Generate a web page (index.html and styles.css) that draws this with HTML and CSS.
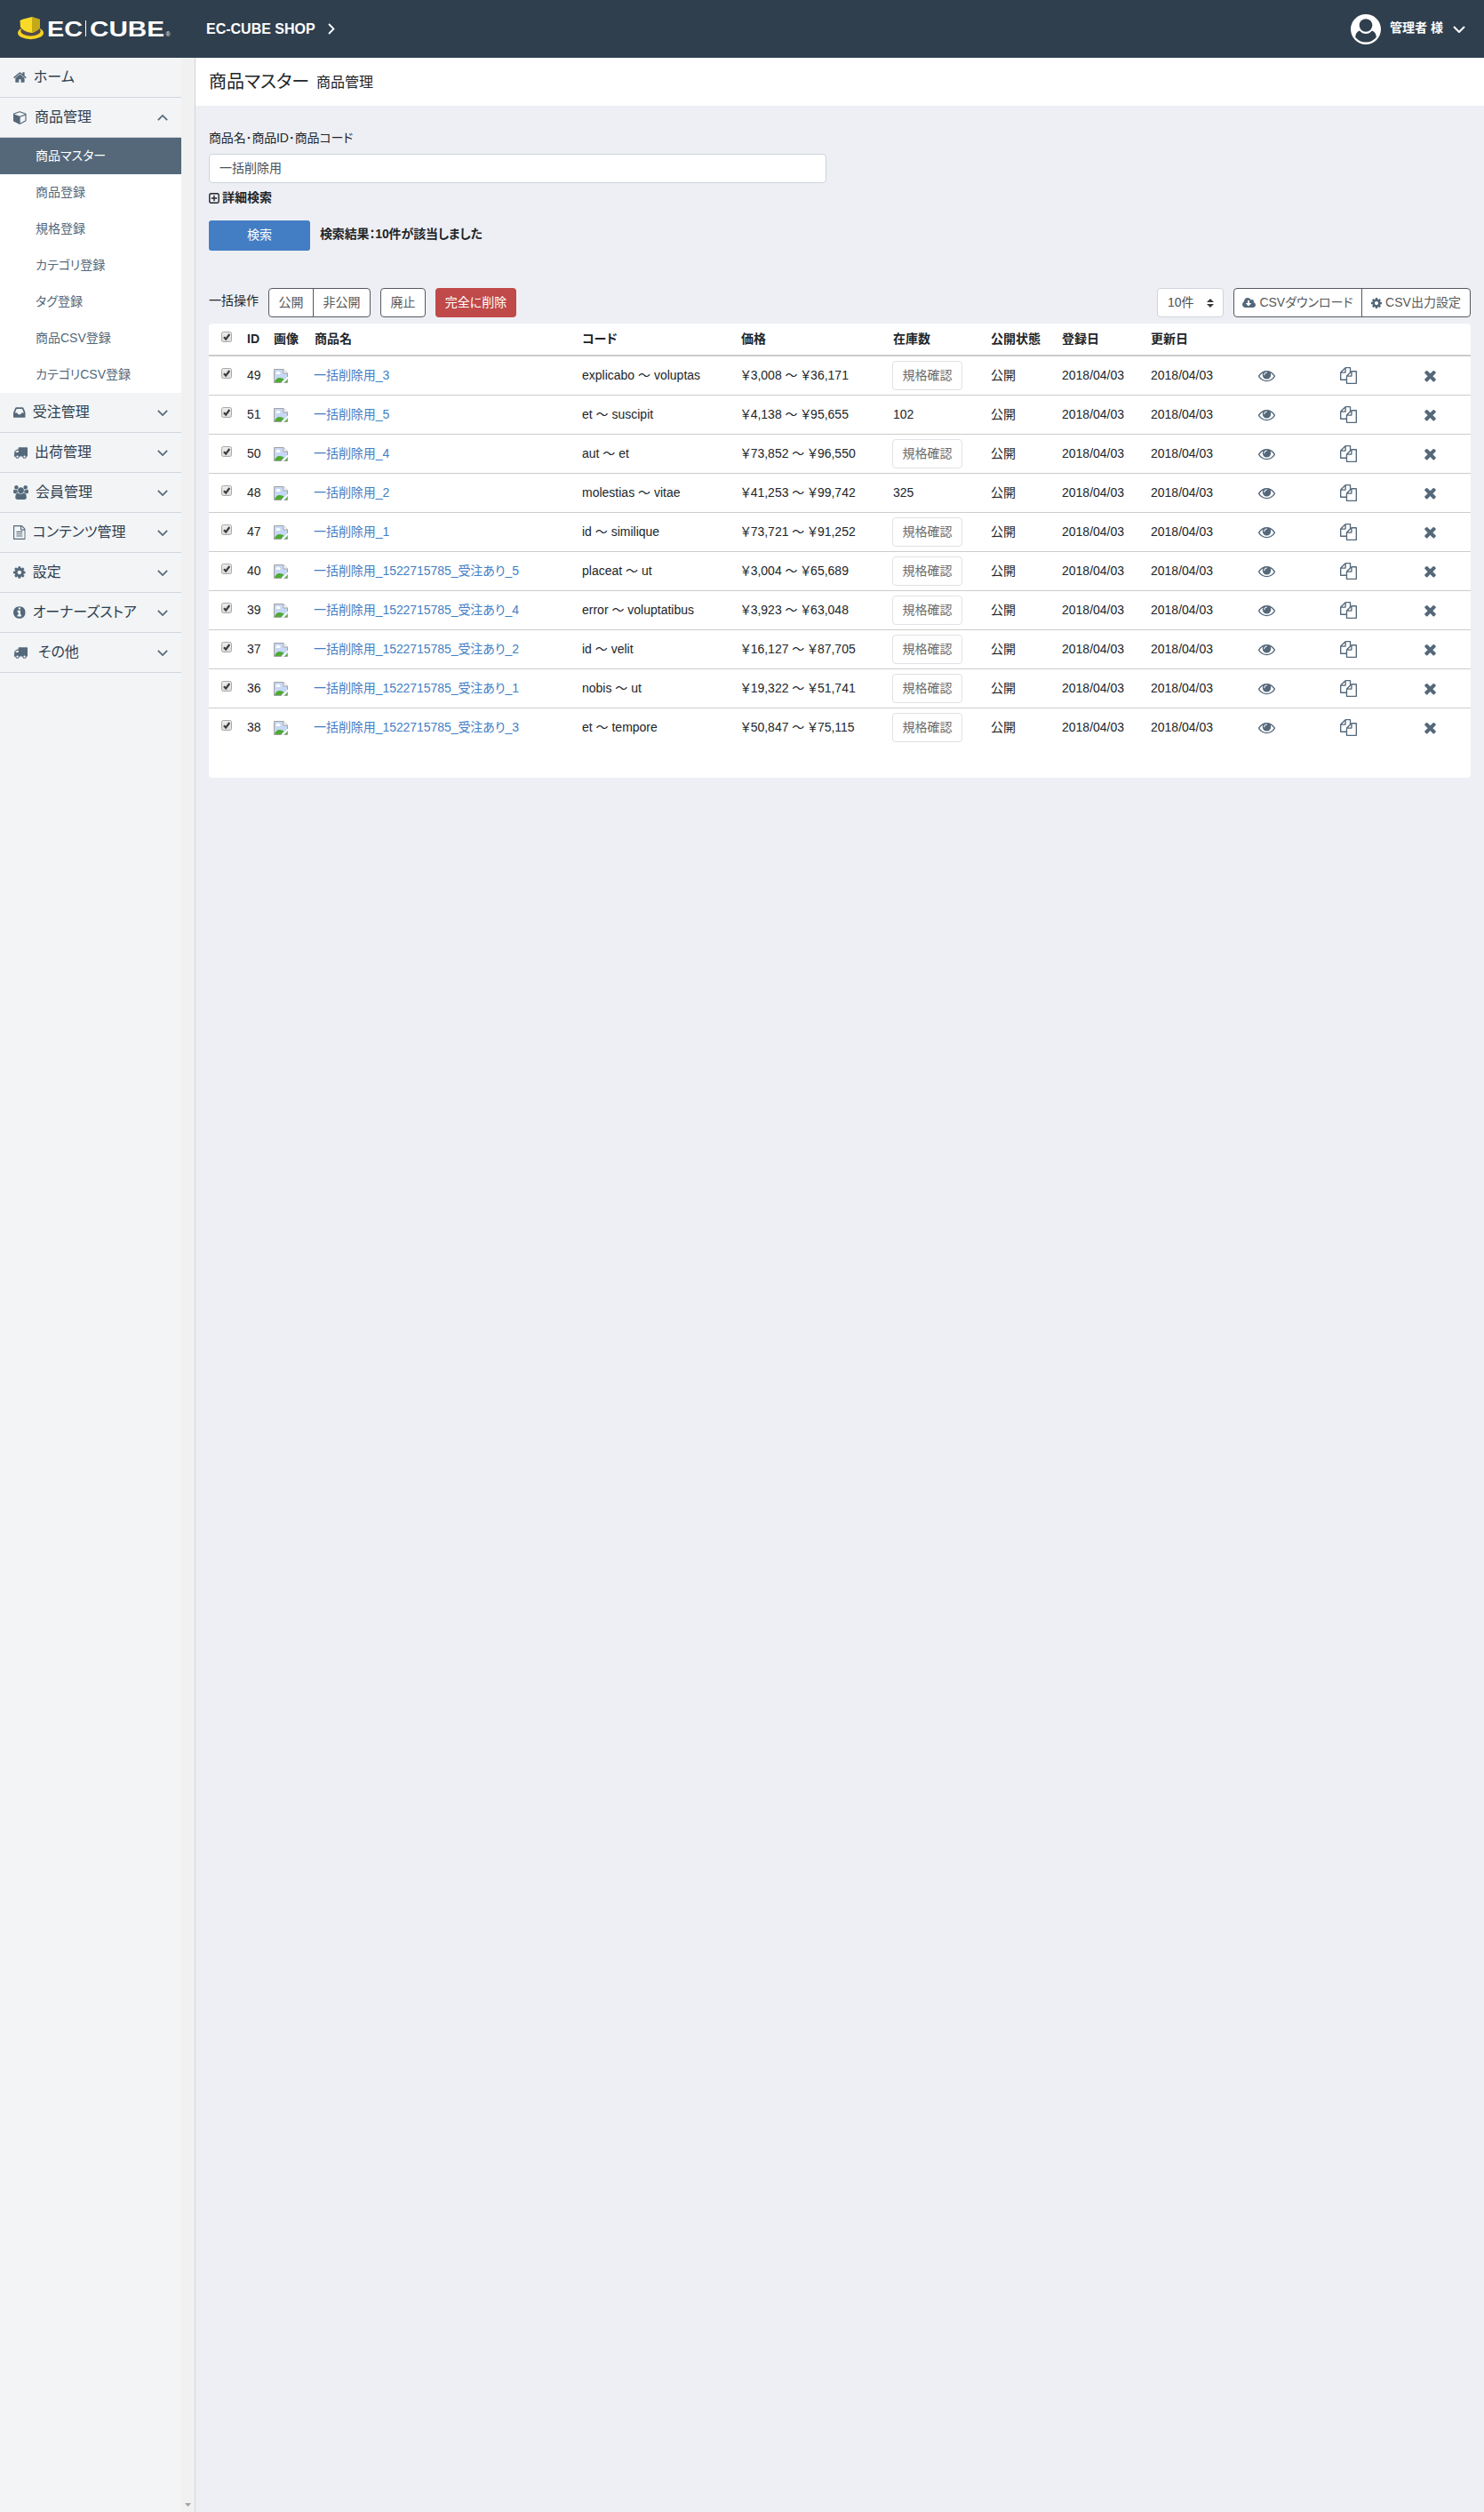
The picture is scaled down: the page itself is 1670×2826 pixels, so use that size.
FILE: index.html
```html
<!DOCTYPE html>
<html lang="ja">
<head>
<meta charset="utf-8">
<title>商品マスター 商品管理 - EC-CUBE SHOP</title>
<link rel="stylesheet" href="styles.css">
</head>
<body>
<svg class="sprite" aria-hidden="true">
  <symbol id="home" viewBox="64 0 1664 1792"><path d="M1472 992v480q0 26-19 45t-45 19h-384v-384h-256v384h-384q-26 0-45-19t-19-45v-480q0-1 .5-3t.5-3l575-474 575 474q1 2 1 6zm223-69l-62 74q-8 9-21 11h-3q-13 0-21-7l-692-577-692 577q-12 8-24 7-13-2-21-11l-62-74q-8-10-7-23.500t11-21.500l719-599q32-26 76-26t76 26l244 204v-195q0-14 9-23t23-9h192q14 0 23 9t9 23v408l219 182q10 8 11 21.500t-7 23.500z"/></symbol>
  <symbol id="cube" viewBox="64 0 1728 1792"><path d="M896 1629l640-349v-636l-640 233v752zm-64-865l698-254-698-254-698 254zm832-252v768q0 35-18 65t-49 47l-704 384q-28 16-61 16t-61-16l-704-384q-31-17-49-47t-18-65v-768q0-40 23-73t61-47l704-256q22-8 44-8t44 8l704 256q38 14 61 47t23 73z"/></symbol>
  <symbol id="inbox" viewBox="128 0 1536 1792"><path d="M1151 960h316q-1-3-2.500-8t-2.500-8l-212-496h-708l-212 496q-1 2-2.500 8t-2.500 8h316l95 192h320zm513 30v482q0 26-19 45t-45 19h-1408q-26 0-45-19t-19-45v-482q0-62 25-123l238-552q10-25 36.500-42t52.500-17h832q26 0 52.500 17t36.500 42l238 552q25 61 25 123z"/></symbol>
  <symbol id="truck" viewBox="0 0 1792 1792"><path d="M640 1408q0-52-38-90t-90-38-90 38-38 90 38 90 90 38 90-38 38-90zm-384-512h384v-256h-158q-13 0-22 9l-195 195q-9 9-9 22v30zm1280 512q0-52-38-90t-90-38-90 38-38 90 38 90 90 38 90-38 38-90zm256-1088v1024q0 15-4 26.500t-13.500 18.500-16.500 11.500-23.500 6-22.500 2-25.500 0-22.500-.5q0 106-75 181t-181 75-181-75-75-181h-384q0 106-75 181t-181 75-181-75-75-181h-64q-3 0-22.500.5t-25.500 0-22.500-2-23.500-6-16.500-11.500-13.500-18.500-4-26.500q0-26 19-45t45-19v-320q0-8-.5-35t0-38 2.500-34.500 6.500-37 14-30.500 22.500-30l198-198q19-19 50.500-32t58.500-13h160v-192q0-26 19-45t45-19h1024q26 0 45 19t19 45z"/></symbol>
  <symbol id="users" viewBox="-64 0 1920 1792"><path d="M529 896q-162 5-265 128h-134q-82 0-138-40.500t-56-118.500q0-353 124-353 6 0 43.500 21t97.500 42.500 119 21.500q67 0 133-23-5 37-5 66 0 139 81 256zm1071 637q0 120-73 189.500t-194 69.500h-874q-121 0-194-69.500t-73-189.500q0-53 3.500-103.500t14-109 26.500-108.500 43-97.500 62-81 85.500-53.500 111.500-20q10 0 43 21.500t73 48 107 48 135 21.500 135-21.500 107-48 73-48 43-21.500q61 0 111.500 20t85.500 53.500 62 81 43 97.500 26.500 108.500 14 109 3.500 103.500zm-1024-1277q0 106-75 181t-181 75-181-75-75-181 75-181 181-75 181 75 75 181zm704 384q0 159-112.500 271.500t-271.500 112.500-271.500-112.500-112.500-271.500 112.500-271.500 271.500-112.500 271.500 112.500 112.500 271.500zm576 225q0 78-56 118.500t-138 40.500h-134q-103-123-265-128 81-117 81-256 0-29-5-66 66 23 133 23 59 0 119-21.500t97.500-42.500 43.500-21q124 0 124 353zm-128-609q0 106-75 181t-181 75-181-75-75-181 75-181 181-75 181 75 75 181z"/></symbol>
  <symbol id="file" viewBox="128 0 1536 1792"><path d="M1596 380q28 28 48 76t20 88v1152q0 40-28 68t-68 28h-1344q-40 0-68-28t-28-68v-1600q0-40 28-68t68-28h896q40 0 88 20t76 48zm-444-244v376h376q-10-29-22-41l-313-313q-12-12-41-22zm384 1528v-1024h-416q-40 0-68-28t-28-68v-416h-768v1536h1280zm-1024-864q0-14 9-23t23-9h704q14 0 23 9t9 23v64q0 14-9 23t-23 9h-704q-14 0-23-9t-9-23v-64zm736 224q14 0 23 9t9 23v64q0 14-9 23t-23 9h-704q-14 0-23-9t-9-23v-64q0-14 9-23t23-9h704zm0 256q14 0 23 9t9 23v64q0 14-9 23t-23 9h-704q-14 0-23-9t-9-23v-64q0-14 9-23t23-9h704z"/></symbol>
  <symbol id="cog" viewBox="128 0 1536 1792"><path d="M1152 896q0-106-75-181t-181-75-181 75-75 181 75 181 181 75 181-75 75-181zm512-109v222q0 12-8 23t-20 13l-185 28q-19 54-39 91 35 50 107 138 10 12 10 25t-9 23q-27 37-99 108t-94 71q-12 0-26-9l-138-108q-44 23-91 38-16 136-29 186-7 28-36 28h-222q-14 0-24.500-8.500t-11.500-21.500l-28-184q-49-16-90-37l-141 107q-10 9-25 9-14 0-25-11-126-114-165-168-7-10-7-23 0-12 8-23 15-21 51-66.500t54-70.500q-27-50-41-99l-183-27q-13-2-21-12.500t-8-23.500v-222q0-12 8-23t19-13l186-28q14-46 39-92-40-57-107-138-10-12-10-24 0-10 9-23 26-36 98.500-107.500t94.500-71.500q13 0 26 10l138 107q44-23 91-38 16-136 29-186 7-28 36-28h222q14 0 24.500 8.500t11.500 21.500l28 184q49 16 90 37l142-107q9-9 24-9 13 0 25 10 129 119 165 170 7 8 7 22 0 12-8 23-15 21-51 66.500t-54 70.500q26 50 41 98l183 28q13 2 21 12.500t8 23.500z"/></symbol>
  <symbol id="info" viewBox="128 0 1536 1792"><path d="M1152 1376v-160q0-14-9-23t-23-9h-96v-512q0-14-9-23t-23-9h-320q-14 0-23 9t-9 23v160q0 14 9 23t23 9h96v320h-96q-14 0-23 9t-9 23v160q0 14 9 23t23 9h448q14 0 23-9t9-23zm-128-896v-160q0-14-9-23t-23-9h-192q-14 0-23 9t-9 23v160q0 14 9 23t23 9h192q14 0 23-9t9-23zm640 416q0 209-103 385.500t-279.500 279.500-385.500 103-385.500-103-279.500-279.500-103-385.500 103-385.500 279.500-279.500 385.500-103 385.500 103 279.500 279.500 103 385.500z"/></symbol>
  <symbol id="cloud" viewBox="-64 0 1920 1792"><path d="M1216 928q0-14-9-23t-23-9h-224v-352q0-13-9.500-22.500t-22.500-9.500h-192q-13 0-22.500 9.500t-9.500 22.500v352h-224q-13 0-22.500 9.500t-9.500 22.500q0 14 9 23l352 352q9 9 23 9t23-9l351-351q10-12 10-24zm640 224q0 159-112.500 271.500t-271.500 112.500h-1088q-185 0-316.500-131.500t-131.500-316.500q0-130 70-240t188-165q-2-30-2-43 0-212 150-362t362-150q156 0 285.500 87t188.500 231q71-62 166-62 106 0 181 75t75 181q0 76-41 138 130 31 213.500 135.500t83.500 238.500z"/></symbol>
  <symbol id="eye" viewBox="0 0 1792 1792"><path d="M1664 960q-152-236-381-353 61 104 61 225 0 185-131.500 316.500t-316.500 131.500-316.500-131.500-131.500-316.500q0-121 61-225-229 117-381 353 133 205 333.500 326.500t434.500 121.500 434.500-121.500 333.500-326.500zm-720-384q0-20-14-34t-34-14q-125 0-214.500 89.500t-89.500 214.500q0 20 14 34t34 14 34-14 14-34q0-86 61-147t147-61q20 0 34-14t14-34zm848 384q0 34-20 69-140 230-376.500 368.500t-499.500 138.500-499.500-139-376.500-368q-20-35-20-69t20-69q140-229 376.500-368t499.500-139 499.500 139 376.500 368q20 35 20 69z"/></symbol>
  <symbol id="copy" viewBox="0 0 1792 1792"><path d="M1696 384q40 0 68 28t28 68v1216q0 40-28 68t-68 28h-960q-40 0-68-28t-28-68v-288h-544q-40 0-68-28t-28-68v-672q0-40 20-88t48-76l408-408q28-28 76-48t88-20h416q40 0 68 28t28 68v328q68-40 128-40h416zm-544 213l-299 299h299v-299zm-640-384l-299 299h299v-299zm196 647l316-316v-416h-384v416q0 40-28 68t-68 28h-416v640h512v-256q0-40 20-88t48-76zm956 804v-1152h-384v416q0 40-28 68t-68 28h-416v640h896z"/></symbol>
  <symbol id="times" viewBox="0 0 1792 1792"><path d="M1490 1322q0 40-28 68l-136 136q-28 28-68 28t-68-28l-294-294-294 294q-28 28-68 28t-68-28l-136-136q-28-28-28-68t28-68l294-294-294-294q-28-28-28-68t28-68l136-136q28-28 68-28t68 28l294 294 294-294q28-28 68-28t68 28l136 136q28 28 28 68t-28 68l-294 294 294 294q28 28 28 68z"/></symbol>
  <symbol id="down" viewBox="0 0 14 8"><path d="M1 1l6 6 6-6" fill="none" stroke="currentColor" stroke-width="2"/></symbol>
  <symbol id="check" viewBox="0 0 12 12"><rect x=".5" y=".5" width="11" height="11" rx="1.800" fill="url(#boxfill)" stroke="#a9a9a9"/><path d="M3 6.200l2.200 2.400L9.300 3" fill="none" stroke="#3b3b3b" stroke-width="2.200"/></symbol>
  <symbol id="noimg" viewBox="0 0 16 16"><path d="M.5 .5h10.500l4.500 4.500v10.500H.5z" fill="#c6d8f5" stroke="#a2a2a2"/><path d="M11 .5V5h4.500" fill="#fff" stroke="#a2a2a2"/><path d="M3 6a1.500 1.500 0 0 1 .5-2.500 1.800 1.800 0 0 1 3 0A1.400 1.400 0 0 1 7 6z" fill="#fff"/><path d="M1 15C2 11.500 4 10 6.500 10s4 1 5 1.500L8.500 15z" fill="#4faa33"/><path d="M12.500 15L15 12.200V15z" fill="#4faa33"/><path d="M8.500 16L16 8.500V10.800L11 16z" fill="#fff"/></symbol>
  <defs><linearGradient id="boxfill" x2="0" y2="1"><stop stop-color="#ededed"/><stop offset="1" stop-color="#dcdcdc"/></linearGradient></defs>
</svg>

<header class="header">
  <a class="logo"><svg width="176" height="30" viewBox="0 0 176 30">
    <ellipse cx="14.500" cy="20" rx="14.500" ry="7.200" fill="#f5d321"/>
    <ellipse cx="14.500" cy="17.800" rx="11.300" ry="5.600" fill="#544b4b"/>
    <path d="M0 12h29v4.500L25 14H4L0 16.500z" fill="#2f3f4e"/>
    <path d="M16 2L25 5V14Q22 18 16 20Q7 19 3 13.500L2.500 6L6 4.500z" fill="#f8da27"/>
    <path d="M16 2L25 5V14Q22 18 16 20z" fill="#c3a819"/>
    <g fill="#fff" font-family="Liberation Sans, sans-serif" font-weight="700">
      <text x="33" y="23.800" font-size="24" textLength="40" lengthAdjust="spacingAndGlyphs">EC</text>
      <text x="81" y="23.800" font-size="24" textLength="84" lengthAdjust="spacingAndGlyphs">CUBE</text>
      <text x="166.500" y="24" font-size="7" font-weight="400">®</text>
    </g>
    <path d="M76.500 6v18" stroke="#fff"/>
  </svg></a>
  <a class="shop">EC-CUBE SHOP<svg width="8" height="13" viewBox="0 0 8 13"><path d="M1 1l5.500 5.500L1 12" fill="none" stroke="#fff" stroke-width="1.800"/></svg></a>
  <div class="account">
    <svg width="34" height="34" viewBox="0 0 34 34"><circle cx="17" cy="17" r="17" fill="#fff"/><circle cx="17" cy="12.500" r="7.300" fill="#2f3f4e"/><path d="M10 18.500Q5 20.500 5.200 26Q10 31.500 17 31.500T28.800 26Q29 20.500 24 18.500Q21 22 17 22T10 18.500z" fill="#2f3f4e"/></svg>
    <span>管理者 様</span>
    <svg class="arrow" width="14" height="8"><use href="#down"/></svg>
  </div>
</header>

<div class="body">
  <aside class="sidebar">
    <nav class="nav">
      <a class="nav-item"><svg width="14.900" height="16"><use href="#home"/></svg><span>ホーム</span></a>
      <a class="nav-item"><svg width="16" height="16"><use href="#cube"/></svg><span>商品管理</span><svg class="chev up" width="12" height="7"><use href="#down"/></svg></a>
      <div class="subnav">
        <a class="active">商品マスター</a>
        <a>商品登録</a>
        <a>規格登録</a>
        <a>カテゴリ登録</a>
        <a>タグ登録</a>
        <a>商品CSV登録</a>
        <a>カテゴリCSV登録</a>
      </div>
      <a class="nav-item"><svg width="13.700" height="16"><use href="#inbox"/></svg><span>受注管理</span><svg class="chev" width="12" height="7"><use href="#down"/></svg></a>
      <a class="nav-item"><svg width="16" height="16"><use href="#truck"/></svg><span>出荷管理</span><svg class="chev" width="12" height="7"><use href="#down"/></svg></a>
      <a class="nav-item"><svg width="17.100" height="16"><use href="#users"/></svg><span>会員管理</span><svg class="chev" width="12" height="7"><use href="#down"/></svg></a>
      <a class="nav-item"><svg width="13.700" height="16"><use href="#file"/></svg><span>コンテンツ管理</span><svg class="chev" width="12" height="7"><use href="#down"/></svg></a>
      <a class="nav-item"><svg width="13.700" height="16"><use href="#cog"/></svg><span>設定</span><svg class="chev" width="12" height="7"><use href="#down"/></svg></a>
      <a class="nav-item"><svg width="13.700" height="16"><use href="#info"/></svg><span>オーナーズストア</span><svg class="chev" width="12" height="7"><use href="#down"/></svg></a>
      <a class="nav-item other"><svg width="16" height="16"><use href="#truck"/></svg><span>その他</span><svg class="chev" width="12" height="7"><use href="#down"/></svg></a>
    </nav>
    <div class="scrollbar"><svg width="7" height="4"><path d="M0 0h7L3.500 4z" fill="#a3a3a3"/></svg></div>
  </aside>

  <main class="main">
    <div class="title"><h1>商品マスター</h1><span>商品管理</span></div>
    <div class="content">
      <label class="label">商品名･商品ID･商品コード</label>
      <div class="input">一括削除用</div>
      <a class="detail"><svg width="12" height="12" viewBox="0 0 12 12"><path d="M2.500 .8h7q1.700 0 1.700 1.700v7q0 1.700-1.700 1.700h-7Q.8 11.200.8 9.500v-7Q.8.8 2.500.8zM6 2.800v6.400M2.800 6h6.400" fill="none" stroke="currentColor" stroke-width="1.400"/></svg><span>詳細検索</span></a>
      <div class="search"><a class="btn-primary">検索</a><b>検索結果：10件が該当しました</b></div>
      <div class="toolbar">
        <span class="bulk">一括操作</span>
        <div class="group"><a class="w51">公開</a><a class="w65">非公開</a></div>
        <div class="group"><a class="w51">廃止</a></div>
        <a class="danger">完全に削除</a>
        <div class="select">10件<svg width="8" height="10" viewBox="0 0 8 10"><path d="M4 0l4 4H0zM4 10L0 6h8z" fill="#343a40"/></svg></div>
        <div class="group"><a class="w145"><svg width="15" height="14"><use href="#cloud"/></svg>CSVダウンロード</a><a class="w123"><svg width="12" height="14"><use href="#cog"/></svg>CSV出力設定</a></div>
      </div>
      <div class="card">
        <table>
          <colgroup><col class="c33"><col class="c30"><col class="c46"><col class="c301"><col class="c179"><col class="c171"><col class="c110"><col class="c80"><col class="c100"><col class="c95"><col class="c92"><col class="c92"><col class="c91"></colgroup>
          <thead><tr><th class="chk"><svg width="12" height="12"><use href="#check"/></svg></th><th>ID</th><th>画像</th><th>商品名</th><th>コード</th><th>価格</th><th>在庫数</th><th>公開状態</th><th>登録日</th><th>更新日</th><th></th><th></th><th></th></tr></thead>
          <tbody>
            <tr><td class="chk"><svg width="12" height="12"><use href="#check"/></svg></td><td>49</td><td><svg class="img" width="16" height="16"><use href="#noimg"/></svg></td><td><a>一括削除用_3</a></td><td>explicabo ～ voluptas</td><td>￥3,008 ～ ￥36,171</td><td><span class="stock">規格確認</span></td><td>公開</td><td>2018/04/03</td><td>2018/04/03</td><td class="act"><svg><use href="#eye"/></svg></td><td class="act"><svg><use href="#copy"/></svg></td><td class="act"><svg><use href="#times"/></svg></td></tr>
            <tr><td class="chk"><svg width="12" height="12"><use href="#check"/></svg></td><td>51</td><td><svg class="img" width="16" height="16"><use href="#noimg"/></svg></td><td><a>一括削除用_5</a></td><td>et ～ suscipit</td><td>￥4,138 ～ ￥95,655</td><td>102</td><td>公開</td><td>2018/04/03</td><td>2018/04/03</td><td class="act"><svg><use href="#eye"/></svg></td><td class="act"><svg><use href="#copy"/></svg></td><td class="act"><svg><use href="#times"/></svg></td></tr>
            <tr><td class="chk"><svg width="12" height="12"><use href="#check"/></svg></td><td>50</td><td><svg class="img" width="16" height="16"><use href="#noimg"/></svg></td><td><a>一括削除用_4</a></td><td>aut ～ et</td><td>￥73,852 ～ ￥96,550</td><td><span class="stock">規格確認</span></td><td>公開</td><td>2018/04/03</td><td>2018/04/03</td><td class="act"><svg><use href="#eye"/></svg></td><td class="act"><svg><use href="#copy"/></svg></td><td class="act"><svg><use href="#times"/></svg></td></tr>
            <tr><td class="chk"><svg width="12" height="12"><use href="#check"/></svg></td><td>48</td><td><svg class="img" width="16" height="16"><use href="#noimg"/></svg></td><td><a>一括削除用_2</a></td><td>molestias ～ vitae</td><td>￥41,253 ～ ￥99,742</td><td>325</td><td>公開</td><td>2018/04/03</td><td>2018/04/03</td><td class="act"><svg><use href="#eye"/></svg></td><td class="act"><svg><use href="#copy"/></svg></td><td class="act"><svg><use href="#times"/></svg></td></tr>
            <tr><td class="chk"><svg width="12" height="12"><use href="#check"/></svg></td><td>47</td><td><svg class="img" width="16" height="16"><use href="#noimg"/></svg></td><td><a>一括削除用_1</a></td><td>id ～ similique</td><td>￥73,721 ～ ￥91,252</td><td><span class="stock">規格確認</span></td><td>公開</td><td>2018/04/03</td><td>2018/04/03</td><td class="act"><svg><use href="#eye"/></svg></td><td class="act"><svg><use href="#copy"/></svg></td><td class="act"><svg><use href="#times"/></svg></td></tr>
            <tr><td class="chk"><svg width="12" height="12"><use href="#check"/></svg></td><td>40</td><td><svg class="img" width="16" height="16"><use href="#noimg"/></svg></td><td><a>一括削除用_1522715785_受注あり_5</a></td><td>placeat ～ ut</td><td>￥3,004 ～ ￥65,689</td><td><span class="stock">規格確認</span></td><td>公開</td><td>2018/04/03</td><td>2018/04/03</td><td class="act"><svg><use href="#eye"/></svg></td><td class="act"><svg><use href="#copy"/></svg></td><td class="act"><svg><use href="#times"/></svg></td></tr>
            <tr><td class="chk"><svg width="12" height="12"><use href="#check"/></svg></td><td>39</td><td><svg class="img" width="16" height="16"><use href="#noimg"/></svg></td><td><a>一括削除用_1522715785_受注あり_4</a></td><td>error ～ voluptatibus</td><td>￥3,923 ～ ￥63,048</td><td><span class="stock">規格確認</span></td><td>公開</td><td>2018/04/03</td><td>2018/04/03</td><td class="act"><svg><use href="#eye"/></svg></td><td class="act"><svg><use href="#copy"/></svg></td><td class="act"><svg><use href="#times"/></svg></td></tr>
            <tr><td class="chk"><svg width="12" height="12"><use href="#check"/></svg></td><td>37</td><td><svg class="img" width="16" height="16"><use href="#noimg"/></svg></td><td><a>一括削除用_1522715785_受注あり_2</a></td><td>id ～ velit</td><td>￥16,127 ～ ￥87,705</td><td><span class="stock">規格確認</span></td><td>公開</td><td>2018/04/03</td><td>2018/04/03</td><td class="act"><svg><use href="#eye"/></svg></td><td class="act"><svg><use href="#copy"/></svg></td><td class="act"><svg><use href="#times"/></svg></td></tr>
            <tr><td class="chk"><svg width="12" height="12"><use href="#check"/></svg></td><td>36</td><td><svg class="img" width="16" height="16"><use href="#noimg"/></svg></td><td><a>一括削除用_1522715785_受注あり_1</a></td><td>nobis ～ ut</td><td>￥19,322 ～ ￥51,741</td><td><span class="stock">規格確認</span></td><td>公開</td><td>2018/04/03</td><td>2018/04/03</td><td class="act"><svg><use href="#eye"/></svg></td><td class="act"><svg><use href="#copy"/></svg></td><td class="act"><svg><use href="#times"/></svg></td></tr>
            <tr><td class="chk"><svg width="12" height="12"><use href="#check"/></svg></td><td>38</td><td><svg class="img" width="16" height="16"><use href="#noimg"/></svg></td><td><a>一括削除用_1522715785_受注あり_3</a></td><td>et ～ tempore</td><td>￥50,847 ～ ￥75,115</td><td><span class="stock">規格確認</span></td><td>公開</td><td>2018/04/03</td><td>2018/04/03</td><td class="act"><svg><use href="#eye"/></svg></td><td class="act"><svg><use href="#copy"/></svg></td><td class="act"><svg><use href="#times"/></svg></td></tr>
          </tbody>
        </table>
      </div>
    </div>
  </main>
</div>
</body>
</html>
```
FILE: styles.css
```css
* { box-sizing: border-box; }
body {
  margin: 0;
  height: 2826px;
  display: flex;
  flex-direction: column;
  background: #eeeff4;
  color: #212529;
  font: 14px/21px "Liberation Sans", "Noto Sans CJK JP", sans-serif;
  font-feature-settings: "palt";
}
svg { fill: currentColor; flex: none; display: block; }
.sprite { position: absolute; width: 0; height: 0; }

.header {
  height: 65px;
  flex: none;
  display: flex;
  align-items: center;
  background: #2f3f4e;
  color: #fff;
  font-weight: 700;
}
.logo { width: 232px; padding: 0 0 1px 20px; }
.shop { display: flex; align-items: center; gap: 14px; font-size: 16px; padding-bottom: 1px; }
.account { margin-left: auto; display: flex; align-items: center; padding-right: 21px; }
.account span { margin-left: 10px; padding-bottom: 2px; }
.account .arrow { margin-left: 11px; }

.body { flex: 1; display: flex; min-height: 0; }
.sidebar { width: 220px; flex: none; display: flex; border-right: 1px solid #d1d5dd; background: #f2f4f6; }
.nav { width: 204px; }
.nav-item {
  height: 45px;
  display: flex;
  align-items: center;
  gap: 8px;
  padding: 0 15px;
  border-bottom: 1px solid #d1d5dd;
  color: #54687a;
  font-size: 16px;
}
.nav-item span { color: #2f3f4e; padding-bottom: 2px; white-space: nowrap; }
.other { gap: 12px; }
.chev { margin-left: auto; }
.up { transform: rotate(180deg); }
.subnav { background: #fff; color: #54687a; }
.subnav a { display: flex; align-items: center; height: 41px; padding: 0 0 1px 40px; }
.subnav .active { background: #54687a; color: #fff; }
.scrollbar { width: 15px; background: #f1f1f1; display: flex; align-items: flex-end; justify-content: center; padding-bottom: 6px; }

.main { flex: 1; min-width: 0; }
.title { height: 54px; padding: 0 15px; display: flex; align-items: center; gap: 8px; background: #fff; font-size: 16px; }
h1 { margin: 0; font-size: 20px; font-weight: 400; }
.content { padding: 26px 15px 0; }
.label { display: block; height: 28px; letter-spacing: -.15px; }
.input { width: 695px; height: 33px; padding: 5px 11px; border: 1px solid #ced4da; border-radius: 4px; background: #fff; color: #495057; line-height: 20px; }
.detail { display: flex; align-items: center; gap: 3px; margin-top: 6px; height: 21px; font-weight: 700; }
.search { display: flex; align-items: center; gap: 11px; margin-top: 15px; height: 34px; }
.btn-primary { width: 114px; height: 34px; line-height: 32px; border-radius: 3px; background: #437ec4; color: #fff; text-align: center; }
.search b { padding-bottom: 3px; letter-spacing: -.15px; }
.toolbar { display: flex; margin-top: 42px; height: 33px; line-height: 31px; color: #595959; }
.bulk { width: 67px; color: #212529; line-height: 29px; }
.group { display: flex; height: 33px; margin-right: 11px; border: 1px solid #54595f; border-radius: 4px; background: #fff; }
.group:last-child { margin-right: 0; }
.group a { display: flex; align-items: center; justify-content: center; gap: 4px; }
.group a + a { border-left: 1px solid #54595f; }
.group svg { color: #54687a; }
.w51 { width: 49px; }
.w65 { width: 64px; }
.w145 { width: 143px; }
.w123 { width: 122px; }
.danger { width: 91px; background: #c04949; color: #fff; border-radius: 4px; text-align: center; line-height: 32px; }
.select { width: 75px; margin: 0 11px 0 auto; padding: 0 10px 0 11px; display: flex; justify-content: space-between; align-items: center; background: #fff; border: 1px solid #ced4da; border-radius: 4px; color: #495057; }

.card { margin-top: 7px; height: 511px; background: #fff; border-radius: 4px; }
table { width: 1420px; table-layout: fixed; border-collapse: separate; border-spacing: 0; }
th, td { padding: 0 0 0 10px; text-align: left; white-space: nowrap; }
th { height: 37px; border-bottom: 2px solid #ccc; padding-bottom: 1px; }
td { height: 44px; border-bottom: 1px solid #ccc; padding-bottom: 1px; }
tr:last-child td { border-bottom-color: transparent; }
th.chk, td.chk { padding: 0 0 5px 14px; }
td a { color: #437ec4; margin-left: -1px; letter-spacing: -.06px; }
.img { margin-top: 2px; }
.stock { display: block; width: 79px; height: 33px; margin-left: -1px; line-height: 30px; text-align: center; border: 1px solid #dee2e6; border-radius: 4px; color: #6c6c6c; }
td:has(.stock) { padding-bottom: 0; }
td.act { padding: 0 1px 0 0; color: #54687a; }
.act svg { width: 19px; height: 19px; margin: 0 auto; }
.c33 { width: 33px; }
.c30 { width: 30px; }
.c46 { width: 46px; }
.c301 { width: 301px; }
.c179 { width: 179px; }
.c171 { width: 171px; }
.c110 { width: 110px; }
.c80 { width: 80px; }
.c100 { width: 100px; }
.c95 { width: 95px; }
.c92 { width: 92px; }
.c91 { width: 91px; }
```
